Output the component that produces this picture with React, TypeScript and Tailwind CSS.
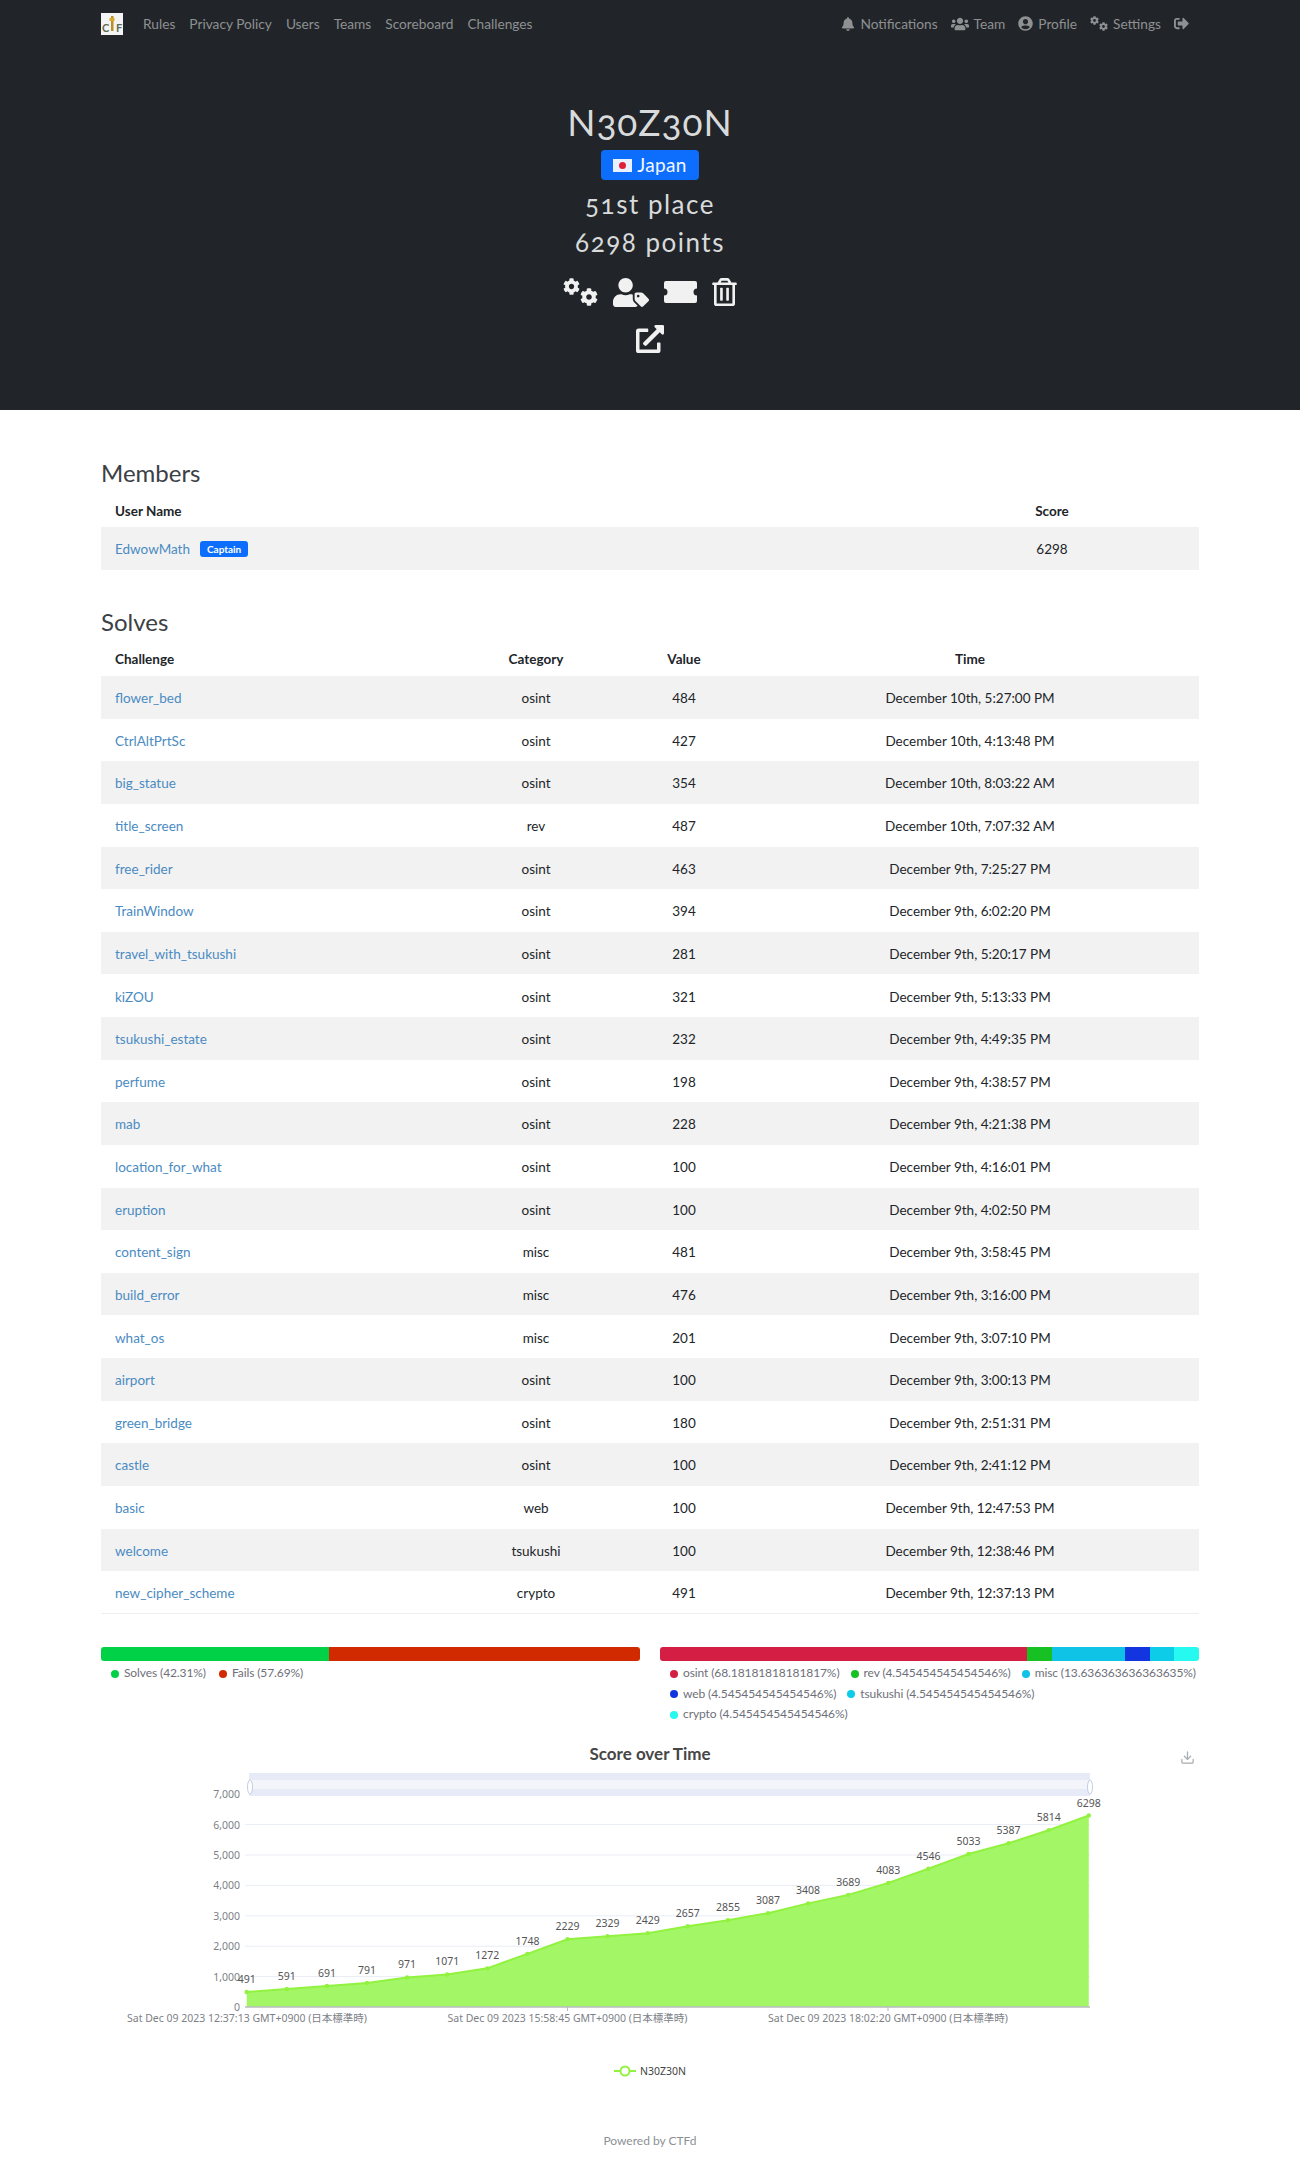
import { FaBell, FaCog, FaExternalLinkAlt, FaRegTrashAlt, FaSignOutAlt, FaUserCircle, FaUserTag, FaUsers } from 'react-icons/fa';
import { LuDownload } from 'react-icons/lu';

const solves = [
  ['flower_bed', 'osint', '484', 'December 10th, 5:27:00 PM'],
  ['CtrlAltPrtSc', 'osint', '427', 'December 10th, 4:13:48 PM'],
  ['big_statue', 'osint', '354', 'December 10th, 8:03:22 AM'],
  ['title_screen', 'rev', '487', 'December 10th, 7:07:32 AM'],
  ['free_rider', 'osint', '463', 'December 9th, 7:25:27 PM'],
  ['TrainWindow', 'osint', '394', 'December 9th, 6:02:20 PM'],
  ['travel_with_tsukushi', 'osint', '281', 'December 9th, 5:20:17 PM'],
  ['kiZOU', 'osint', '321', 'December 9th, 5:13:33 PM'],
  ['tsukushi_estate', 'osint', '232', 'December 9th, 4:49:35 PM'],
  ['perfume', 'osint', '198', 'December 9th, 4:38:57 PM'],
  ['mab', 'osint', '228', 'December 9th, 4:21:38 PM'],
  ['location_for_what', 'osint', '100', 'December 9th, 4:16:01 PM'],
  ['eruption', 'osint', '100', 'December 9th, 4:02:50 PM'],
  ['content_sign', 'misc', '481', 'December 9th, 3:58:45 PM'],
  ['build_error', 'misc', '476', 'December 9th, 3:16:00 PM'],
  ['what_os', 'misc', '201', 'December 9th, 3:07:10 PM'],
  ['airport', 'osint', '100', 'December 9th, 3:00:13 PM'],
  ['green_bridge', 'osint', '180', 'December 9th, 2:51:31 PM'],
  ['castle', 'osint', '100', 'December 9th, 2:41:12 PM'],
  ['basic', 'web', '100', 'December 9th, 12:47:53 PM'],
  ['welcome', 'tsukushi', '100', 'December 9th, 12:38:46 PM'],
  ['new_cipher_scheme', 'crypto', '491', 'December 9th, 12:37:13 PM'],
];

const categories = [
  { label: 'osint (68.18181818181817%)', pct: 68.18, color: '#d41e44' },
  { label: 'rev (4.545454545454546%)', pct: 4.545, color: '#18c123' },
  { label: 'misc (13.636363636363635%)', pct: 13.64, color: '#0ec3e6' },
  { label: 'web (4.545454545454546%)', pct: 4.545, color: '#1235e0' },
  { label: 'tsukushi (4.545454545454546%)', pct: 4.545, color: '#0ccce8' },
  { label: 'crypto (4.545454545454546%)', pct: 4.545, color: '#26f9ef' },
];

const scores = [491, 591, 691, 791, 971, 1071, 1272, 1748, 2229, 2329, 2429, 2657, 2855, 3087, 3408, 3689, 4083, 4546, 5033, 5387, 5814, 6298];

const chartFont = '"Noto Sans", "Noto Sans CJK JP", sans-serif';
const px = (i: number) => 246.7 + i * 40.1;
const py = (v: number) => 2007 - v * 0.0304;

const NavLink = ({ children }: { children: React.ReactNode }) => (
  <span className="flex items-center gap-[5px] text-[13.7px] text-[#8e9092]">{children}</span>
);

const Legend = ({ color, label }: { color: string; label: string }) => (
  <span className="flex items-center gap-[5px] text-[12px] leading-[20.5px] tracking-[-0.1px] text-[#6e7079]">
    <span className="w-2 h-2 rounded-full" style={{ backgroundColor: color }} />
    {label}
  </span>
);

// two separate gears, upper left and lower right
const Gears = ({ big }: { big?: boolean }) => (
  <span className={big ? 'flex w-[35px] h-[28px] justify-between' : 'flex w-[18px] h-[15px] justify-between'}>
    <FaCog className={big ? 'w-[17px] h-[17px] self-start' : 'w-[9px] h-[9px] self-start'} />
    <FaCog className={big ? 'w-[18px] h-[18px] self-end' : 'w-[9px] h-[9px] self-end'} />
  </span>
);

const Ticket = () => (
  <svg viewBox="0 0 33 22" className="w-[33px] h-[22px]" fill="currentColor">
    <path d="M2 0h29a2 2 0 0 1 2 2v5.5a3.5 3.5 0 0 0 0 7V20a2 2 0 0 1-2 2H2a2 2 0 0 1-2-2v-5.5a3.5 3.5 0 0 0 0-7V2a2 2 0 0 1 2-2z" />
  </svg>
);

const Logo = () => (
  <svg viewBox="0 0 22 22" className="w-[22px] h-[22px] mr-[6px]" style={{ fontFamily: 'Lato, sans-serif' }}>
    <rect width="22" height="22" fill="#f4f4f4" />
    <rect x="10" y="3" width="2.5" height="15" fill="#b8901f" />
    <rect x="8.5" y="5" width="5" height="3" fill="#d9a72a" />
    <text x="1" y="19" fontSize="11" fontWeight="700" fill="#5f6b55">C</text>
    <text x="15" y="19" fontSize="11" fontWeight="700" fill="#5f6b55">F</text>
  </svg>
);

const ScoreChart = () => {
  const line = scores.map((v, i) => `${px(i)},${py(v)}`).join(' ');
  return (
    <svg viewBox="101 1729 1098 355" className="block w-full h-[355px]" style={{ fontFamily: chartFont }}>
      <text x="650" y="1760" textAnchor="middle" fontSize="17" fontWeight="700" fill="#464646" style={{ fontFamily: 'Lato, sans-serif' }}>
        Score over Time
      </text>
      {[1, 2, 3, 4, 5, 6].map((k) => (
        <line key={k} x1="245" x2="1090" y1={py(k * 1000)} y2={py(k * 1000)} stroke="#e9edf5" />
      ))}
      {[0, 1, 2, 3, 4, 5, 6, 7].map((k) => (
        <text key={k} x="240" y={2011 - k * 30.4} textAnchor="end" fontSize="10.5" fill="#7d7f87">
          {k === 0 ? '0' : `${k},000`}
        </text>
      ))}
      <rect x="249" y="1773" width="841" height="23" fill="#e6ebf7" />
      <rect x="249" y="1780" width="841" height="9" fill="#f3f5fa" />
      <ellipse cx="250" cy="1787" rx="2.5" ry="7" fill="#fff" stroke="#c3cde4" />
      <ellipse cx="1090" cy="1787" rx="2.5" ry="7" fill="#fff" stroke="#c3cde4" />
      <polygon points={`246.7,2007 ${line} ${px(21)},2007`} fill="#a3f767" />
      <polyline points={line} fill="none" stroke="#91f23f" strokeWidth="2" />
      {scores.map((v, i) => (
        <g key={i}>
          <circle cx={px(i)} cy={py(v)} r="2.2" fill="#91f23f" />
          <text x={px(i)} y={py(v) - 9} textAnchor="middle" fontSize="10.5" fill="#555">
            {v}
          </text>
        </g>
      ))}
      <line x1="245" x2="1090" y1="2007" y2="2007" stroke="#b9bbc0" strokeWidth="1.5" />
      <line x1="567.5" x2="567.5" y1="2007" y2="2011" stroke="#b9bbc0" />
      <line x1="888" x2="888" y1="2007" y2="2011" stroke="#b9bbc0" />
      {[
        [247, 'Sat Dec 09 2023 12:37:13 GMT+0900 (日本標準時)'],
        [567.5, 'Sat Dec 09 2023 15:58:45 GMT+0900 (日本標準時)'],
        [888, 'Sat Dec 09 2023 18:02:20 GMT+0900 (日本標準時)'],
      ].map(([x, t]) => (
        <text key={t} x={x} y="2022" textAnchor="middle" fontSize="10.5" fill="#7d7f87">
          {t}
        </text>
      ))}
      <line x1="614" x2="636" y1="2071" y2="2071" stroke="#91f23f" strokeWidth="2" />
      <circle cx="625" cy="2071" r="4.5" fill="#fff" stroke="#91f23f" strokeWidth="2" />
      <text x="640" y="2075" fontSize="10.5" fill="#444">N30Z30N</text>
    </svg>
  );
};

export default function App() {
  return (
    <div className="bg-white text-[#212529] text-[13.5px]" style={{ fontFamily: 'Lato, "Liberation Sans", sans-serif' }}>
      <header className="bg-[#212529] h-[410px]">
        <nav className="h-[48px] pl-[101px] pr-[111px] flex items-center justify-between">
          <div className="flex items-center gap-[14px]">
            <Logo />
            {['Rules', 'Privacy Policy', 'Users', 'Teams', 'Scoreboard', 'Challenges'].map((l) => (
              <NavLink key={l}><span className="pt-[1px]">{l}</span></NavLink>
            ))}
          </div>
          <div className="flex items-center gap-[13px]">
            <NavLink><FaBell className="w-[14px] h-[14px]" /><span className="pt-[1px]">Notifications</span></NavLink>
            <NavLink><FaUsers className="w-[18px] h-[16px]" /><span className="pt-[1px]">Team</span></NavLink>
            <NavLink><FaUserCircle className="w-[15px] h-[15px]" /><span className="pt-[1px]">Profile</span></NavLink>
            <NavLink><Gears /><span className="pt-[1px]">Settings</span></NavLink>
            <NavLink><FaSignOutAlt className="w-[15px] h-[15px]" /></NavLink>
          </div>
        </nav>
        <div className="flex flex-col items-center text-[#d9dadb]">
          <h1 className="mt-[50px] text-[37px] leading-[48px] oldstyle-nums tracking-[1px]">N30Z30N</h1>
          <div className="mt-[4px] w-[98px] h-[30px] bg-[#0d6efd] rounded-[4px] flex items-center justify-center gap-[5px] text-[#f3f7ff] text-[19px] tracking-[0.3px]">
            <span className="w-[19px] h-[13px] bg-white/90 flex items-center justify-center">
              <span className="w-[7px] h-[7px] rounded-full bg-[#e0203a]" />
            </span>
            Japan
          </div>
          <div className="mt-[4px] text-[26px] leading-[40px] oldstyle-nums tracking-[1.5px]">51st place</div>
          <div className="mt-[-1px] text-[26px] leading-[38px] oldstyle-nums tracking-[1.5px]">6298 points</div>
          <div className="mt-[15px] flex items-center gap-[15px] text-[#f1f1f1] h-[32px]">
            <Gears big />
            <FaUserTag className="w-[36px] h-[29px]" />
            <Ticket />
            <FaRegTrashAlt className="w-[25px] h-[28px]" />
          </div>
          <FaExternalLinkAlt className="mt-[17px] w-[28px] h-[28px] text-[#f1f1f1]" />
        </div>
      </header>

      <main className="px-[101px]">
        <h2 className="mt-[45px] h-[36px] text-[24px] leading-[36px] text-[#3b4045]">Members</h2>
        <table className="w-full table-fixed border-collapse">
          <thead>
            <tr className="h-[36px]">
              <th className="w-[804px] pl-[14px] pt-[4px] text-left font-bold">User Name</th>
              <th className="pt-[4px] font-bold">Score</th>
            </tr>
          </thead>
          <tbody>
            <tr className="h-[43px] bg-[#f2f2f2]">
              <td className="pl-[14px] pt-[2px]">
                <span className="text-[#4a8bc2]">EdwowMath</span>
                <span className="ml-[10px] inline-block align-[1px] px-[7px] h-[16px] leading-[16px] rounded-[3px] bg-[#0d6efd] text-white text-[10px] font-bold">Captain</span>
              </td>
              <td className="pt-[2px] text-center">6298</td>
            </tr>
          </tbody>
        </table>

        <h2 className="mt-[34px] h-[36px] text-[24px] leading-[36px] text-[#3b4045]">Solves</h2>
        <table className="w-full table-fixed border-collapse border-b border-[#eeeeee]">
          <thead>
            <tr className="h-[36px]">
              <th className="w-[344px] pl-[14px] pt-[3px] text-left font-bold">Challenge</th>
              <th className="w-[182px] pt-[3px] font-bold">Category</th>
              <th className="w-[114px] pt-[3px] font-bold">Value</th>
              <th className="pt-[3px] font-bold">Time</th>
            </tr>
          </thead>
          <tbody>
            {solves.map((s, i) => (
              <tr key={s[0]} className={`h-[42.64px] ${i % 2 === 0 ? 'bg-[#f2f2f2]' : 'bg-white'}`}>
                <td className="pl-[14px] pt-[2px] text-[#4a8bc2]">{s[0]}</td>
                <td className="pt-[2px] text-center">{s[1]}</td>
                <td className="pt-[2px] text-center">{s[2]}</td>
                <td className="pt-[2px] text-center">{s[3]}</td>
              </tr>
            ))}
          </tbody>
        </table>

        <div className="mt-[33px] grid grid-cols-2 gap-[20px]">
          <div>
            <div className="flex h-[14px] rounded-[3px] overflow-hidden">
              <div className="bg-[#00d146] w-[42.31%]" />
              <div className="bg-[#d12a00] flex-1" />
            </div>
            <div className="mt-[2px] pl-[10px] flex gap-[13px]">
              <Legend color="#00d146" label="Solves (42.31%)" />
              <Legend color="#d12a00" label="Fails (57.69%)" />
            </div>
          </div>
          <div>
            <div className="flex h-[14px] rounded-[3px] overflow-hidden">
              {categories.map((c) => (
                <div key={c.label} style={{ width: `${c.pct}%`, backgroundColor: c.color }} />
              ))}
            </div>
            <div className="mt-[2px] pl-[10px] flex flex-wrap gap-x-[11px]">
              {categories.map((c) => (
                <Legend key={c.label} color={c.color} label={c.label} />
              ))}
            </div>
          </div>
        </div>

        <div className="relative mt-[4.5px]">
          <ScoreChart />
          <LuDownload className="absolute top-[21px] right-[4px] w-[15px] h-[15px] text-[#a8abb0]" />
        </div>
      </main>

      <footer className="h-[82px] pt-[47px] text-center text-[12px] leading-[20px] text-[#8c9196]">Powered by CTFd</footer>
    </div>
  );
}
